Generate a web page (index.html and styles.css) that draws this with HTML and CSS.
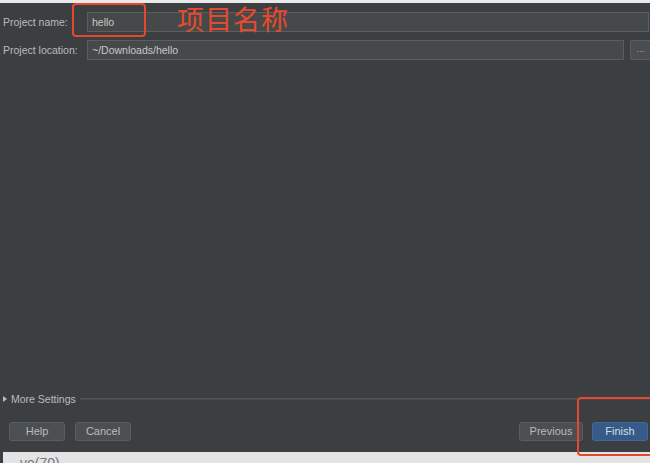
FILE: index.html
```html
<!DOCTYPE html>
<html>
<head>
<meta charset="utf-8">
<link rel="stylesheet" href="styles.css">
</head>
<body>
<div class="dialog">
  <div class="topstrip"></div>
  <div class="form">
    <label class="label">Project name:</label>
    <div class="field"><div class="input wide">hello</div></div>
    <label class="label">Project location:</label>
    <div class="field">
      <div class="input">~/Downloads/hello</div>
      <div class="browse">...</div>
    </div>
  </div>
  <div class="spacer"></div>
  <div class="more">
    <span class="tri"></span>
    <span class="more-text">More Settings</span>
    <span class="sep"></span>
  </div>
  <div class="buttons">
    <div class="group">
      <div class="btn w56">Help</div>
      <div class="btn w56">Cancel</div>
    </div>
    <div class="group">
      <div class="btn prev">Previous</div>
      <div class="btn finish">Finish</div>
    </div>
  </div>
  <div class="bottom"><span class="bottom-text">ve(70)</span></div>

  <div class="mark mark-name"></div>
  <div class="mark-text">项目名称</div>
  <div class="mark mark-finish"></div>
</div>
</body>
</html>
```
FILE: styles.css
```css
html, body {
  margin: 0;
  padding: 0;
}
body {
  background: #3c3f41;
  font-family: "Liberation Sans", Arial, sans-serif;
  font-size: 10.5px;
  color: #bbbbbb;
}
.dialog {
  position: relative;
  width: 650px;
  height: 463px;
  display: flex;
  flex-direction: column;
  overflow: hidden;
}
.topstrip {
  height: 3px;
  background: #e9e9e9;
}
.form {
  display: grid;
  grid-template-columns: 84px 1fr;
  row-gap: 8px;
  padding: 9px 0 0 3px;
}
.label {
  display: flex;
  align-items: center;
  height: 20px;
  white-space: nowrap;
}
.field {
  display: flex;
  height: 20px;
}
.input {
  flex: 1;
  box-sizing: border-box;
  height: 20px;
  background: #45494a;
  border: 1px solid #5b5e60;
  color: #c8c8c8;
  padding-left: 4px;
  line-height: 18px;
  margin-right: 0;
}
.input.wide {
  margin-right: 1px;
}
.browse {
  width: 20px;
  box-sizing: border-box;
  margin-left: 6px;
  height: 20px;
  background: #4a4e50;
  border: 1px solid #5b5e60;
  border-right: none;
  border-radius: 3px 0 0 3px;
  color: #aaaaaa;
  font-size: 9px;
  line-height: 16px;
  text-align: center;
}
.spacer {
  flex: 1;
}
.more {
  display: flex;
  align-items: center;
  height: 14px;
  padding-left: 3px;
  margin-bottom: 16px;
}
.tri {
  width: 0;
  height: 0;
  border-top: 3px solid transparent;
  border-bottom: 3px solid transparent;
  border-left: 4px solid #bbbbbb;
  margin-right: 4px;
}
.more-text {
  white-space: nowrap;
  margin-right: 4px;
}
.sep {
  flex: 1;
  height: 1px;
  background: #525557;
  border-bottom: 1px solid #46494b;
}
.buttons {
  display: flex;
  justify-content: space-between;
  padding: 0 2px 0 9px;
  margin-bottom: 11px;
}
.group {
  display: flex;
  gap: 10px;
}
.btn {
  box-sizing: border-box;
  height: 19px;
  border: 1px solid #5a5e60;
  background: #4b4f51;
  border-radius: 3px;
  color: #bbbbbb;
  font-size: 11px;
  line-height: 17px;
  text-align: center;
}
.w56 { width: 56px; }
.prev { width: 64px; }
.group .finish {
  width: 56px;
  background: #375b88;
  border-color: #42679a;
  color: #d6dde6;
  margin-left: -1px;
}
.bottom {
  height: 11px;
  background: #e4e4e4;
  margin-left: 3px;
  overflow: hidden;
}
.bottom-text {
  display: block;
  padding-left: 17px;
  font-size: 14px;
  line-height: 22px;
  color: #777777;
}
.mark {
  position: absolute;
  border: 2px solid #e5482b;
  border-radius: 4px;
  box-sizing: border-box;
}
.mark-name {
  left: 72px;
  top: 3px;
  width: 74px;
  height: 34px;
}
.mark-finish {
  left: 577px;
  top: 397px;
  width: 80px;
  height: 59px;
}
.mark-text {
  position: absolute;
  left: 177px;
  top: 3px;
  font-family: "Noto Sans CJK SC", sans-serif;
  font-size: 27px;
  line-height: 32px;
  color: #e8492c;
  letter-spacing: 1px;
}
```
